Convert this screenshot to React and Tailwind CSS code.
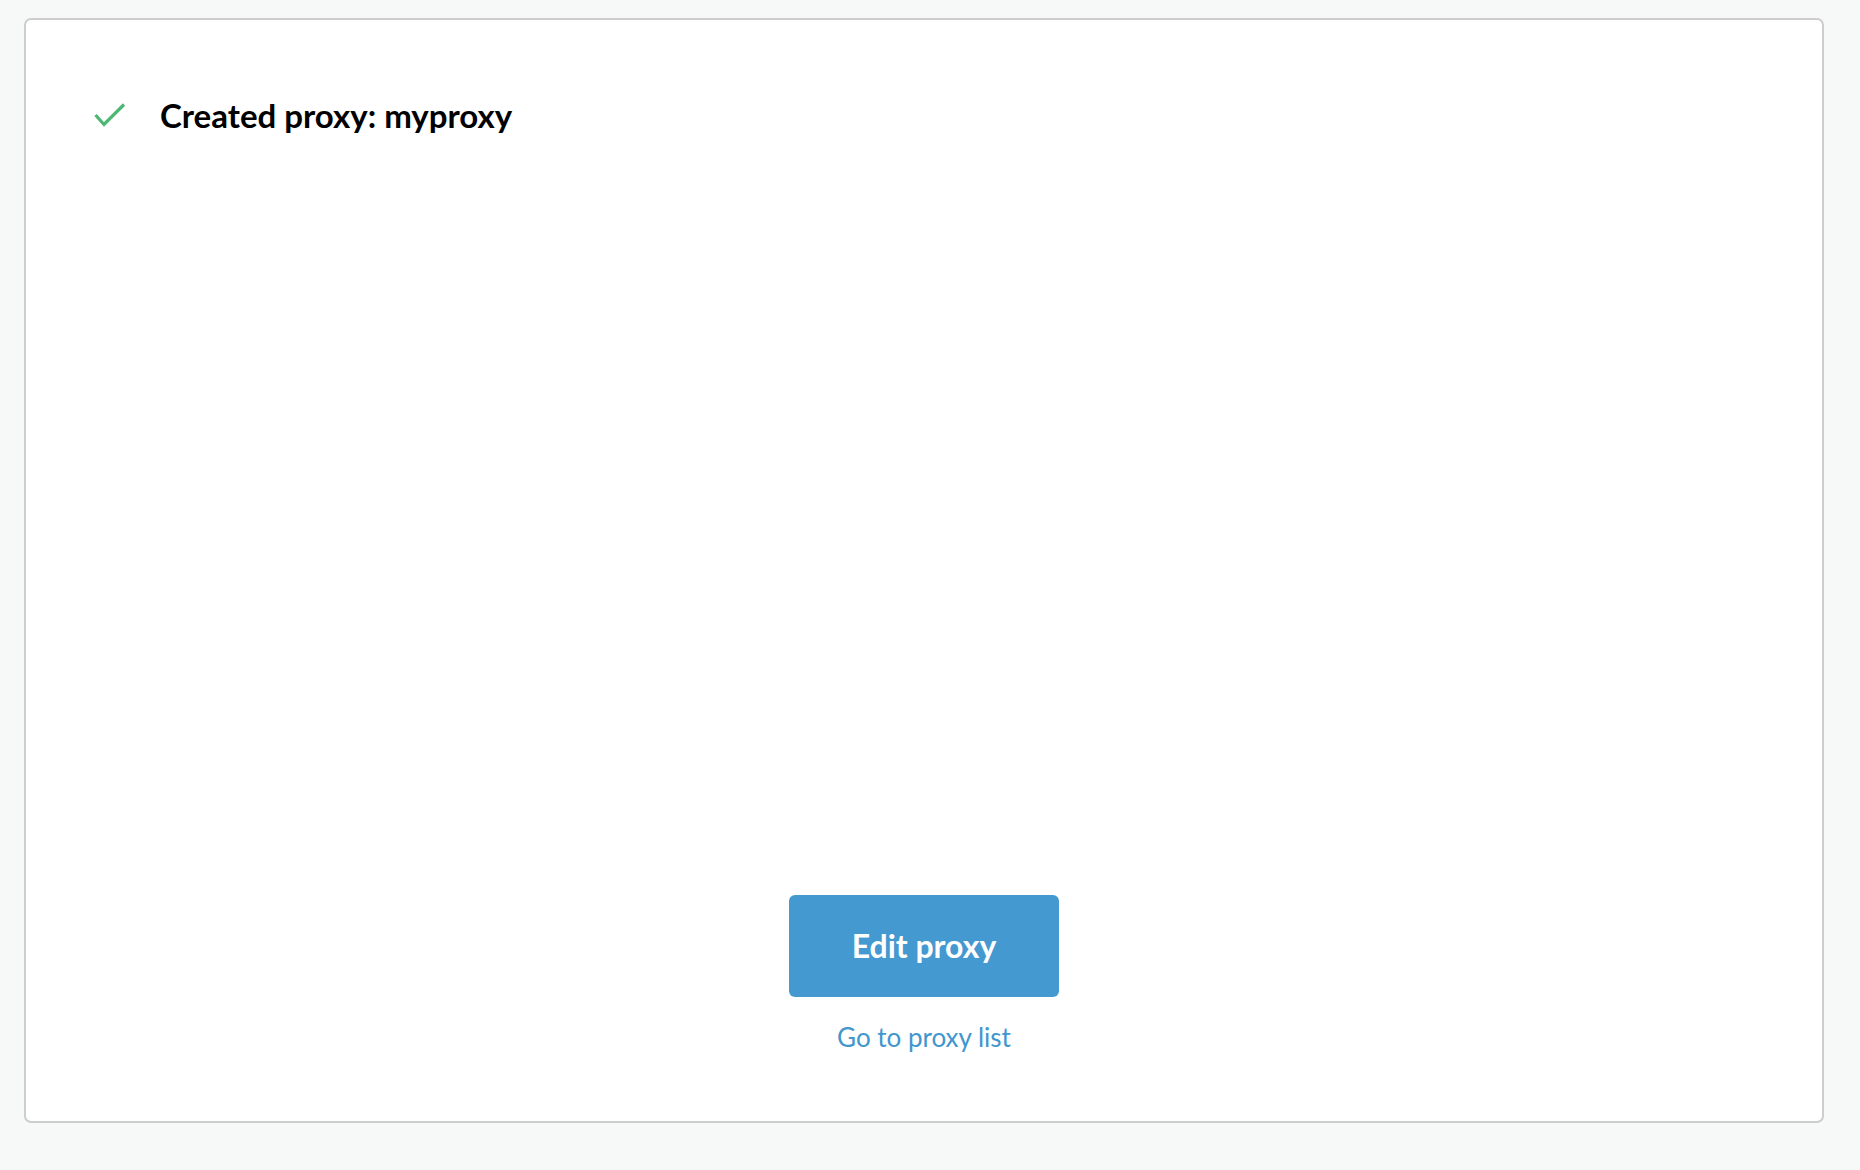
import React from 'react';

const CheckIcon = () => (
  <svg width="32" height="26" viewBox="0 0 32 26" fill="none" className="shrink-0">
    <polyline
      points="1.5,12 10,21.5 30,1.5"
      stroke="#4cb872"
      strokeWidth="3.2"
      strokeLinecap="butt"
      strokeLinejoin="miter"
    />
  </svg>
);

const App = () => {
  return (
    <div className="min-h-screen bg-[#f7f8f8] pl-[24px] pr-[36px] pt-[18px] pb-[48px] font-['Lato','Liberation_Sans',sans-serif]">
      <div className="h-[1105px] bg-white border-2 border-[#cdcdcd] rounded-[7px] flex flex-col">
        {/* Status line */}
        <div className="flex items-center pl-[68px] pt-[79px]">
          <CheckIcon />
          <h1 className="ml-[34px] text-[33px] font-bold text-black leading-none">
            Created proxy: myproxy
          </h1>
        </div>

        <div className="flex-1" />

        {/* Actions */}
        <div className="flex flex-col items-center pb-[71px]">
          <button className="w-[270px] h-[102px] rounded-[6px] bg-[#4499d0] text-white text-[32px] font-bold">
            Edit proxy
          </button>
          <a href="#" className="mt-[27px] text-[26px] text-[#4196cd] leading-none">
            Go to proxy list
          </a>
        </div>
      </div>
    </div>
  );
};

export default App;
